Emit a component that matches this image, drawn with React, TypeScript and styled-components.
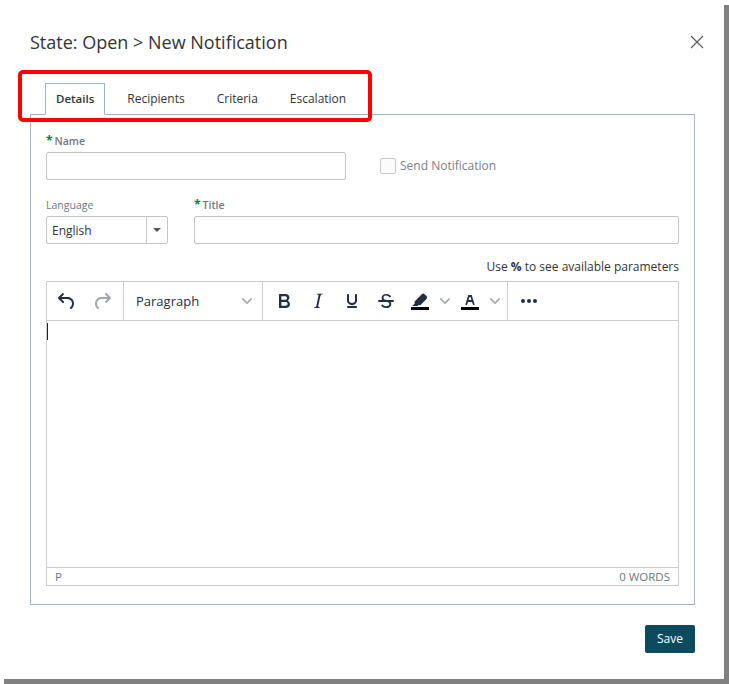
import React from 'react'
import styled, { createGlobalStyle } from 'styled-components'

const GlobalStyle = createGlobalStyle`
  html, body {
    margin: 0;
    padding: 0;
    background: #fff;
  }
  body {
    font-family: "Open Sans", "Liberation Sans", sans-serif;
    color: #333;
  }
`

const Chevron = () => (
  <ChevronIcon viewBox="0 0 10 10">
    <path d="M8.700 2.200c.3-.3.800-.3 1 0 .4.400.4.900 0 1.200L5.700 7.800c-.3.300-.9.300-1.200 0L.200 3.400a.8.800 0 0 1 0-1.200c.3-.3.800-.3 1.100 0L5 6l3.700-3.800z" fill="currentColor" />
  </ChevronIcon>
)

const tabs = ['Details', 'Recipients', 'Criteria', 'Escalation']

export default function App() {
  return (
    <Page>
      <GlobalStyle />
      <Dialog>
        <Header>
          <Title>State: Open &gt; New Notification</Title>
          <CloseButton>
            <svg width="14" height="14" viewBox="0 0 14 14">
              <path d="M1 1l12 12M13 1L1 13" stroke="#555" strokeWidth="1.1" fill="none" />
            </svg>
          </CloseButton>
        </Header>

        <TabBar>
          {tabs.map((t, i) => (
            <Tab key={t} $active={i === 0}>{t}</Tab>
          ))}
        </TabBar>
        <Callout />

        <Panel>
          <NameRow>
            <Field $width={300}>
              <Label $strong><Star>*</Star>Name</Label>
              <Input />
            </Field>
            <CheckRow>
              <Checkbox />
              <CheckText>Send Notification</CheckText>
            </CheckRow>
          </NameRow>

          <TitleRow>
            <Field $width={122}>
              <Label>Language</Label>
              <Select>
                <SelectValue>English</SelectValue>
                <SelectArrow><Caret /></SelectArrow>
              </Select>
            </Field>
            <Field $grow>
              <Label $strong><Star>*</Star>Title</Label>
              <Input />
            </Field>
          </TitleRow>

          <Hint>Use <b>%</b> to see available parameters</Hint>

          <Editor>
            <Toolbar>
              <HistoryGroup>
                <ToolIcon viewBox="0 0 24 24" $color="#222f3e">
                  <path d="M6.400 8H12c3.700 0 6.200 2 6.800 5.100.6 2.700-.4 5.600-2.300 6.800a1 1 0 0 1-1-1.800c1.100-.8 1.800-2.700 1.400-4.600C16.500 11.200 14.600 10 12 10H6.400l2.300 2.300a1 1 0 1 1-1.400 1.400l-4-4a1 1 0 0 1 0-1.400l4-4a1 1 0 0 1 1.400 1.400L6.400 8z" fill="currentColor" />
                </ToolIcon>
                <ToolIcon viewBox="0 0 24 24" $color="#a3a7ad">
                  <path d="M17.600 10H12c-2.800 0-4.400 1.400-4.900 3.500-.4 2 .3 3.900 1.400 4.600a1 1 0 1 1-1 1.800c-2-1.200-2.900-4.100-2.300-6.800.6-3 3-5.100 6.800-5.100h5.600l-2.300-2.300a1 1 0 1 1 1.400-1.400l4 4a1 1 0 0 1 0 1.400l-4 4a1 1 0 0 1-1.400-1.400l2.300-2.300z" fill="currentColor" />
                </ToolIcon>
              </HistoryGroup>
              <FormatGroup>
                <FormatName>Paragraph</FormatName>
                <Chevron />
              </FormatGroup>
              <StyleGroup>
                <ToolIcon viewBox="0 0 24 24" $color="#222f3e">
                  <path d="M7.800 19c-.3 0-.5 0-.6-.2l-.2-.5V5.700c0-.2 0-.4.2-.5l.6-.2h5c1.500 0 2.700.3 3.500 1 .7.600 1.100 1.400 1.100 2.500a3 3 0 0 1-.6 1.900c-.4.600-1 1-1.600 1.200.4.100.9.300 1.300.6s.8.700 1 1.200c.3.400.4 1 .4 1.600 0 1.300-.4 2.300-1.300 3-.8.700-2.100 1-3.800 1H7.800zm5-8.300c.6 0 1.200-.1 1.600-.5.400-.3.600-.7.600-1.300 0-1.100-.8-1.700-2.300-1.700H9.300v3.500h3.500zm.5 6c.7 0 1.300-.1 1.700-.4.400-.4.600-.9.600-1.500s-.2-1-.7-1.400c-.4-.3-1-.4-2-.4H9.400v3.800h3.900z" fill="currentColor" />
                </ToolIcon>
                <ToolIcon viewBox="0 0 24 24" $color="#222f3e">
                  <path d="M16.700 4.700l-.1.900h-.3c-.6 0-1 0-1.400.3-.3.300-.4.600-.5 1.100l-2.100 9.800v.6c0 .5.400.8 1.400.8h.2l-.2.800H8l.2-.8h.2c1.100 0 1.800-.5 2-1.500l2-9.800.1-.5c0-.6-.4-.8-1.400-.8h-.3l.2-.9h5.700z" fill="currentColor" />
                </ToolIcon>
                <ToolIcon viewBox="0 0 24 24" $color="#222f3e">
                  <path d="M16 5c.6 0 1 .4 1 1v5.500a4 4 0 0 1-.4 1.800l-1 1.400a5.300 5.300 0 0 1-5.500 1 5 5 0 0 1-1.600-1c-.5-.4-.8-.9-1.100-1.400a4 4 0 0 1-.4-1.800V6c0-.6.400-1 1-1s1 .4 1 1v5.500c0 .3 0 .6.200 1l.6.700a3.300 3.300 0 0 0 2.200.8 3.400 3.400 0 0 0 2.200-.8c.3-.2.400-.5.600-.8l.2-.9V6c0-.6.400-1 1-1zM8 17h8c.6 0 1 .4 1 1s-.4 1-1 1H8a1 1 0 0 1 0-2z" fill="currentColor" />
                </ToolIcon>
                <ToolIcon viewBox="0 0 24 24" $color="#222f3e">
                  <path d="M15.600 8.500c-.5-.7-1-1.100-1.300-1.300-.6-.4-1.300-.6-2-.6-2.700 0-2.800 1.700-2.800 2.100 0 1.600 1.800 2 3.200 2.300 4.400.9 4.600 2.800 4.600 3.900 0 1.400-.7 4.100-5 4.100A6.200 6.200 0 0 1 7 16.400l1.500-1.100c.4.600 1.600 2 3.700 2 1.600 0 2.500-.4 3-1.200.4-.8.300-2-.8-2.600-.7-.4-1.600-.7-2.900-1-1-.2-3.900-.8-3.900-3.600C7.600 6 10.300 5 12.400 5c2.900 0 4.200 1.600 4.700 2.400l-1.500 1.100z" fill="currentColor" />
                  <path d="M5 11h14a1 1 0 0 1 0 2H5a1 1 0 0 1 0-2z" fill="currentColor" />
                </ToolIcon>
                <ColorTool>
                  <ToolIcon viewBox="0 0 24 24" $color="#222f3e">
                    <path d="M13.800 5.200c.8-.8 2-.8 2.800 0l1.900 1.900c.8.800.8 2 0 2.800l-6.200 6.300-1.700-.1-.9.900H4.200l2.500-2.600-.1-1.900z" fill="currentColor" />
                    <rect x="3" y="18" width="18" height="3" fill="#000" />
                  </ToolIcon>
                  <Chevron />
                </ColorTool>
                <ColorTool>
                  <ToolIcon viewBox="0 0 24 24" $color="#222f3e">
                    <path d="M8.700 16h-.8a.5.5 0 0 1-.5-.6l2.700-9c.1-.3.3-.4.500-.4h2.800c.2 0 .4.100.5.400l2.700 9a.5.500 0 0 1-.5.600h-.8a.5.500 0 0 1-.4-.4l-.7-2.200c0-.2-.3-.4-.5-.4h-3.400c-.2 0-.4.200-.5.400l-.7 2.200c0 .2-.2.400-.4.400zm2.600-7.600l-.6 2a.5.500 0 0 0 .5.600h1.600a.5.500 0 0 0 .5-.6l-.6-2c0-.3-.3-.4-.5-.4h-.4c-.2 0-.4.100-.5.400z" fill="currentColor" fillRule="evenodd" />
                    <rect x="3" y="18" width="18" height="3" fill="#000" />
                  </ToolIcon>
                  <Chevron />
                </ColorTool>
              </StyleGroup>
              <MoreGroup>
                <svg width="18" height="6" viewBox="0 0 18 6">
                  <circle cx="3" cy="3" r="2" fill="#222f3e" />
                  <circle cx="9" cy="3" r="2" fill="#222f3e" />
                  <circle cx="15" cy="3" r="2" fill="#222f3e" />
                </svg>
              </MoreGroup>
            </Toolbar>
            <EditArea>
              <TextCursor />
            </EditArea>
            <StatusBar>
              <span>P</span>
              <span>0 WORDS</span>
            </StatusBar>
          </Editor>
        </Panel>

        <Footer>
          <SaveButton>Save</SaveButton>
        </Footer>
      </Dialog>
    </Page>
  )
}

const Page = styled.div`
  width: 729px;
  height: 684px;
  overflow: hidden;
  background:
    linear-gradient(#fff, #fff) left top / 5px 5px no-repeat,
    linear-gradient(#fff, #fff) right top / 5px 5px no-repeat,
    linear-gradient(#fff, #fff) left bottom / 4px 5px no-repeat,
    #808080;
`

const Dialog = styled.div`
  position: relative;
  box-sizing: border-box;
  width: 724px;
  height: 679px;
  padding: 0 29px 0 30px;
  background: #fff;
`

const Header = styled.div`
  display: flex;
  justify-content: space-between;
  height: 83px;
`

const Title = styled.h1`
  margin: 0;
  padding-top: 30px;
  font-size: 18px;
  line-height: 25px;
  font-weight: 400;
  color: #333;
`

const CloseButton = styled.div`
  margin-top: 35px;
  margin-right: -9px;
  width: 14px;
  height: 14px;
  line-height: 0;
`

const TabBar = styled.div`
  position: relative;
  z-index: 1;
  display: flex;
  height: 32px;
  padding-left: 15px;
`

const Tab = styled.div<{ $active?: boolean }>`
  box-sizing: border-box;
  height: 32px;
  padding: 7px 10px 0;
  margin-right: ${p => (p.$active ? '11px' : '10px')};
  border: 1px solid ${p => (p.$active ? '#9fb3c8' : 'transparent')};
  border-bottom: 1px solid ${p => (p.$active ? '#fff' : 'transparent')};
  background: ${p => (p.$active ? '#fff' : 'transparent')};
  font-size: ${p => (p.$active ? '11.5px' : '12px')};
  line-height: 16px;
  font-weight: ${p => (p.$active ? 600 : 400)};
  color: #333;
`

const Callout = styled.div`
  position: absolute;
  left: 18px;
  top: 70px;
  box-sizing: border-box;
  width: 354px;
  height: 52px;
  border: 4px solid #f00;
  border-radius: 5px;
  pointer-events: none;
  z-index: 2;
`

const Panel = styled.div`
  box-sizing: border-box;
  height: 491px;
  margin-top: -1px;
  padding: 19px 15px 0;
  border: 1px solid #9fb3c8;
`

const NameRow = styled.div`
  display: flex;
  align-items: flex-start;
`

const Field = styled.div<{ $width?: number; $grow?: boolean }>`
  display: flex;
  flex-direction: column;
  width: ${p => (p.$width ? `${p.$width}px` : 'auto')};
  flex: ${p => (p.$grow ? 1 : 'none')};
`

const Label = styled.div<{ $strong?: boolean }>`
  height: 18px;
  font-size: 10.5px;
  line-height: 14px;
  font-weight: ${p => (p.$strong ? 600 : 400)};
  color: #6f7780;
`

const Star = styled.span`
  margin-right: 2px;
  font-size: 12px;
  color: #0b8043;
  font-weight: 700;
`

const Input = styled.div`
  box-sizing: border-box;
  height: 28px;
  border: 1px solid #c4c4c4;
  border-radius: 2px;
  background: #fff;
`

const CheckRow = styled.div`
  display: flex;
  align-items: center;
  gap: 4px;
  margin: 23px 0 0 34px;
`

const Checkbox = styled.div`
  box-sizing: border-box;
  width: 16px;
  height: 16px;
  border: 1px solid #c8c8c8;
  border-radius: 2px;
  background: #fbfbfb;
`

const CheckText = styled.span`
  font-size: 12px;
  line-height: 18px;
  color: #7a7f85;
`

const TitleRow = styled.div`
  display: flex;
  gap: 26px;
  margin-top: 18px;
`

const Select = styled.div`
  box-sizing: border-box;
  display: flex;
  height: 28px;
  border: 1px solid #c4c4c4;
  border-radius: 2px;
`

const SelectValue = styled.div`
  flex: 1;
  padding-left: 5px;
  font-size: 12px;
  line-height: 27px;
  color: #333;
`

const SelectArrow = styled.div`
  display: flex;
  align-items: center;
  justify-content: center;
  width: 20px;
  border-left: 1px solid #c4c4c4;
`

const Caret = styled.i`
  width: 0;
  height: 0;
  border-left: 4px solid transparent;
  border-right: 4px solid transparent;
  border-top: 4px solid #555;
`

const Hint = styled.div`
  box-sizing: border-box;
  height: 37px;
  padding-top: 15px;
  text-align: right;
  font-size: 12px;
  line-height: 16px;
  color: #333;
  b { font-weight: 700; }
`

const Editor = styled.div`
  box-sizing: border-box;
  display: flex;
  flex-direction: column;
  height: 305px;
  border: 1px solid #ccc;
`

const Toolbar = styled.div`
  box-sizing: border-box;
  display: flex;
  align-items: stretch;
  height: 39px;
  border-bottom: 1px solid #ccc;
`

const ToolIcon = styled.svg<{ $color: string }>`
  width: 24px;
  height: 24px;
  color: ${p => p.$color};
  flex: none;
`

const ChevronIcon = styled.svg`
  width: 10px;
  height: 10px;
  color: #a3a7ad;
  flex: none;
`

const HistoryGroup = styled.div`
  box-sizing: border-box;
  display: flex;
  align-items: center;
  gap: 11px;
  width: 77px;
  padding-left: 8px;
  border-right: 1px solid #ccc;
`

const FormatGroup = styled.div`
  box-sizing: border-box;
  display: flex;
  align-items: center;
  justify-content: space-between;
  width: 139px;
  padding: 0 10px 0 12px;
  border-right: 1px solid #ccc;
`

const FormatName = styled.span`
  font-size: 13px;
  color: #222f3e;
`

const StyleGroup = styled.div`
  box-sizing: border-box;
  display: flex;
  align-items: center;
  gap: 10px;
  width: 245px;
  padding-left: 9px;
  border-right: 1px solid #ccc;
`

const ColorTool = styled.div`
  display: flex;
  align-items: center;
  gap: 8px;
  margin-right: -2px;
`

const MoreGroup = styled.div`
  display: flex;
  align-items: center;
  padding-left: 12px;
`

const EditArea = styled.div`
  flex: 1;
  padding-top: 2px;
`

const TextCursor = styled.div`
  width: 1px;
  height: 17px;
  background: #222;
`

const StatusBar = styled.div`
  box-sizing: border-box;
  display: flex;
  align-items: center;
  justify-content: space-between;
  height: 18px;
  padding: 0 8px;
  border-top: 1px solid #ccc;
  font-size: 11.5px;
  color: #70767d;
`

const Footer = styled.div`
  display: flex;
  justify-content: flex-end;
  padding-top: 20px;
`

const SaveButton = styled.div`
  width: 50px;
  height: 28px;
  border-radius: 2px;
  background: #0d4a60;
  color: #fff;
  font-size: 12px;
  font-weight: 400;
  line-height: 28px;
  text-align: center;
`
